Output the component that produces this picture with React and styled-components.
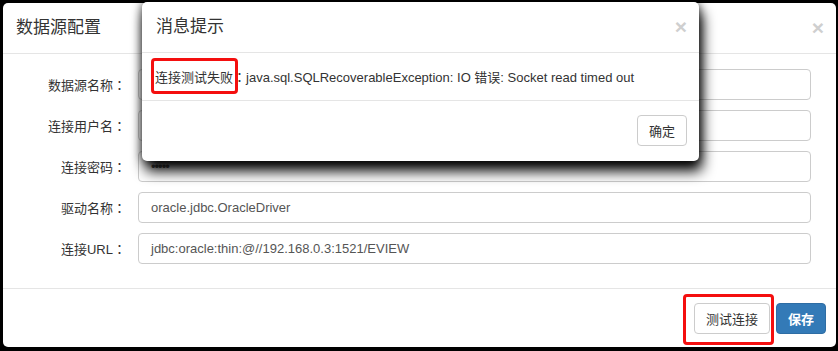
import React from "react";
import styled, { createGlobalStyle } from "styled-components";

const Global = createGlobalStyle`
  html, body { margin: 0; padding: 0; background: #000; }
  body {
    font-family: "Liberation Sans", Arial, "Noto Sans CJK SC", sans-serif;
    font-size: 13px;
    color: #333;
    width: 838px;
    height: 351px;
    overflow: hidden;
  }
  * { box-sizing: border-box; }
`;

const Stage = styled.div`
  position: relative;
  padding: 3px 2px 4px 3px;
  height: 351px;
`;

const Modal = styled.div`
  background: #fff;
  border-radius: 5px;
  height: 344px;
  display: flex;
  flex-direction: column;
`;

const Header = styled.div`
  height: 51px;
  border-bottom: 1px solid #e5e5e5;
  display: flex;
  align-items: center;
  justify-content: space-between;
  padding: 0 ${(p) => p.$pr || 12}px 2px ${(p) => p.$pl || 13}px;
`;

const Title = styled.h4`
  margin: 0;
  font-size: 17px;
  font-weight: normal;
  color: #333;
  line-height: 1;
`;

const Close = styled.span`
  font-family: "Liberation Sans", Arial, sans-serif;
  font-size: 21px;
  font-weight: bold;
  color: #cfcfcf;
  line-height: 1;
`;

const Colon = styled.span`
  font-family: "Noto Sans CJK TC", sans-serif;
`;

const Form = styled.div`
  display: grid;
  grid-template-columns: 123px 1fr;
  column-gap: 12px;
  row-gap: 10px;
  padding: 15px 25px 24px 0;
  border-bottom: 1px solid #e5e5e5;
`;

const Label = styled.label`
  text-align: right;
  align-self: center;
  font-size: 13px;
  color: #333;
`;

const Input = styled.div`
  height: 31px;
  border: 1px solid #ccc;
  border-radius: 4px;
  padding: 0 12px;
  display: flex;
  align-items: center;
  font-size: 13px;
  color: #555;
  letter-spacing: ${(p) => (p.$pwd ? "-1px" : "0")};
`;

const Footer = styled.div`
  display: flex;
  justify-content: flex-end;
  gap: 6px;
  padding: 14px 10px 0 0;
`;

const Button = styled.button`
  font-family: "Liberation Sans", Arial, "Noto Sans CJK SC", sans-serif;
  font-size: 13px;
  height: 31px;
  padding: 0 11px;
  border-radius: 4px;
  border: 1px solid ${(p) => (p.$primary ? "#2e6da4" : "#ccc")};
  background: ${(p) => (p.$primary ? "#337ab7" : "#fff")};
  color: ${(p) => (p.$primary ? "#fff" : "#333")};
  font-weight: ${(p) => (p.$primary ? "bold" : "normal")};
  position: relative;
`;

const Highlight = styled.span`
  position: relative;
  display: inline-block;
  &::after {
    content: "";
    position: absolute;
    top: ${(p) => p.$t}px;
    bottom: ${(p) => p.$b}px;
    left: ${(p) => p.$l}px;
    right: ${(p) => p.$r}px;
    border: 3px solid #f40f0f;
    border-radius: 4px;
    pointer-events: none;
  }
`;

const Dialog = styled.div`
  position: absolute;
  left: 142px;
  top: 2px;
  width: 557px;
  height: 159px;
  background: #fff;
  border-radius: 5px;
  box-shadow: 3px 10px 14px rgba(0, 0, 0, 1), 0 0 10px rgba(0, 0, 0, 0.7);
  display: flex;
  flex-direction: column;
`;

const DialogBody = styled.div`
  height: 48px;
  border-bottom: 1px solid #e5e5e5;
  display: flex;
  align-items: center;
  padding: 0 0 0 13px;
  font-size: 13px;
  color: #333;
  white-space: pre;
`;

const DialogFooter = styled.div`
  display: flex;
  justify-content: flex-end;
  padding: 14px 12px 0 0;
`;

const fields = [
  { label: "数据源名称", value: "" },
  { label: "连接用户名", value: "" },
  { label: "连接密码", value: "•••••", pwd: true },
  { label: "驱动名称", value: "oracle.jdbc.OracleDriver" },
  { label: "连接URL", value: "jdbc:oracle:thin:@//192.168.0.3:1521/EVIEW" },
];

export default function App() {
  return (
    <>
      <Global />
      <Stage>
        <Modal>
          <Header>
            <Title>数据源配置</Title>
            <Close>×</Close>
          </Header>
          <Form>
            {fields.map((f) => (
              <React.Fragment key={f.label}>
                <Label>
                  {f.label}
                  <Colon>：</Colon>
                </Label>
                <Input $pwd={f.pwd}>{f.value}</Input>
              </React.Fragment>
            ))}
          </Form>
          <Footer>
            <Highlight $t={-9} $b={-11} $l={-11} $r={-4}>
              <Button>测试连接</Button>
            </Highlight>
            <Button $primary>保存</Button>
          </Footer>
        </Modal>
        <Dialog>
          <Header $pl={14} $pr={12}>
            <Title>消息提示</Title>
            <Close>×</Close>
          </Header>
          <DialogBody>
            <Highlight $t={-9} $b={-8} $l={-4} $r={-5}>
              连接测试失败
            </Highlight>
            <Colon>：</Colon>
            java.sql.SQLRecoverableException: IO 错误: Socket read timed out
          </DialogBody>
          <DialogFooter>
            <Button>确定</Button>
          </DialogFooter>
        </Dialog>
      </Stage>
    </>
  );
}
